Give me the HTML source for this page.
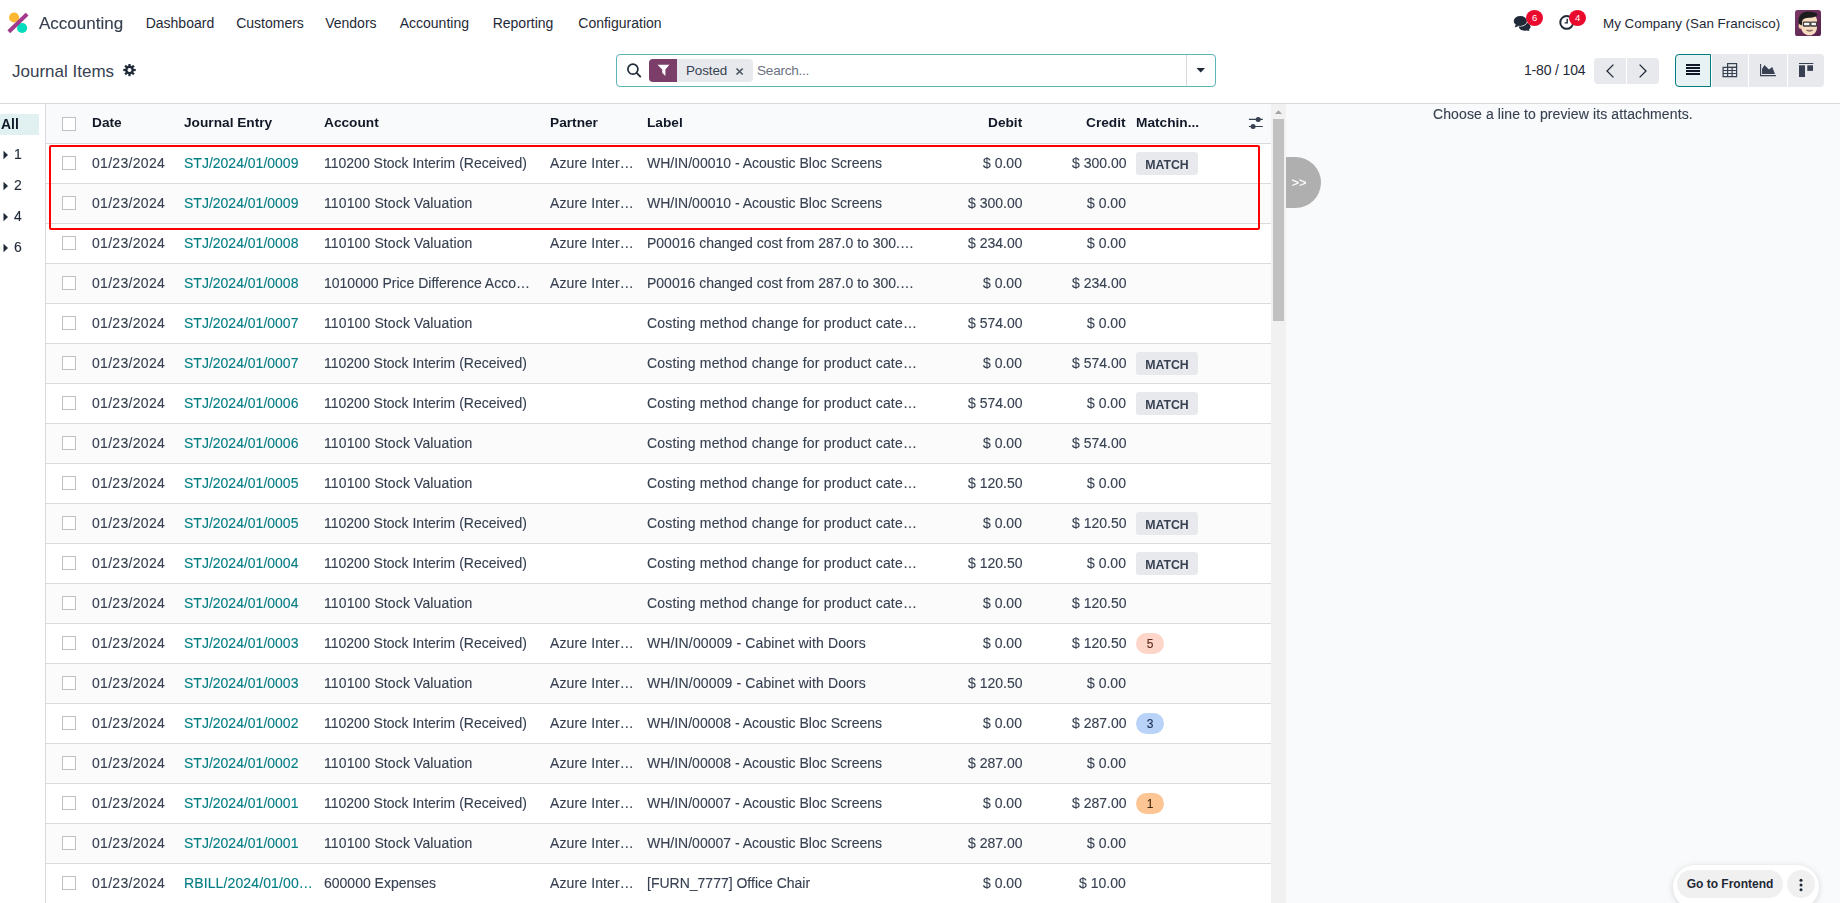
<!DOCTYPE html>
<html><head><meta charset="utf-8"><title>Journal Items</title>
<style>
html,body{margin:0;padding:0;}
body{width:1840px;height:903px;overflow:hidden;position:relative;background:#fff;font-family:"Liberation Sans", sans-serif;}
.t{position:absolute;white-space:nowrap;}
.g{will-change:transform;-webkit-text-stroke:0.12px currentColor;}
.gb{will-change:transform;}
.b{position:absolute;}
</style></head><body>
<svg class="b" style="left:0;top:0" width="40" height="46" viewBox="0 0 40 46">
<circle cx="14.1" cy="17.5" r="5.1" fill="#FDB733"/>
<circle cx="22.1" cy="28" r="5.1" fill="#00DDBE"/>
<line x1="8.8" y1="31.8" x2="27.1" y2="14.1" stroke="#A3398A" stroke-width="4" stroke-linecap="butt"/>
</svg><div class="t g" style="left:39px;top:13.71px;font-size:17px;line-height:20px;color:#374151;font-weight:400;">Accounting</div><div class="t" style="left:145.7px;top:14.95px;font-size:14px;line-height:16px;color:#1f2937;font-weight:400;">Dashboard</div><div class="t" style="left:236.2px;top:14.95px;font-size:14px;line-height:16px;color:#1f2937;font-weight:400;">Customers</div><div class="t" style="left:325.2px;top:14.95px;font-size:14px;line-height:16px;color:#1f2937;font-weight:400;">Vendors</div><div class="t" style="left:399.7px;top:14.95px;font-size:14px;line-height:16px;color:#1f2937;font-weight:400;">Accounting</div><div class="t" style="left:492.7px;top:14.95px;font-size:14px;line-height:16px;color:#1f2937;font-weight:400;">Reporting</div><div class="t" style="left:578.3px;top:14.95px;font-size:14px;line-height:16px;color:#1f2937;font-weight:400;">Configuration</div><svg class="b" style="left:1510px;top:12px" width="24" height="22" viewBox="0 0 24 22">
<path d="M14.6 10.4 C18 10.4 20.6 12.4 20.6 14.6 C20.6 15.9 19.9 17 18.8 17.7 L19.6 18.9 L16.4 18.4 C15.8 18.6 15.2 18.7 14.6 18.7 C11.4 18.7 8.8 16.8 8.8 14.6 C8.8 12.4 11.4 10.4 14.6 10.4Z" fill="#1f2937"/>
<ellipse cx="10.3" cy="9" rx="7.2" ry="5.6" fill="#fff"/>
<ellipse cx="10.3" cy="9" rx="6.6" ry="5.1" fill="#1f2937"/>
<path d="M5.8 12.6 L4.6 15.6 L9.5 13.8Z" fill="#1f2937"/>
</svg><div class="b" style="left:1526px;top:10px;width:17px;height:16px;border-radius:50%;background:#EA0A2E;"></div><div class="t" style="left:1234.6px;width:600px;text-align:center;top:12.41px;font-size:9.5px;line-height:11px;color:#fff;font-weight:400;">6</div><svg class="b" style="left:1557px;top:13px" width="20" height="20" viewBox="0 0 20 20">
<circle cx="9.7" cy="9.4" r="6.4" fill="none" stroke="#1f2937" stroke-width="2"/>
<path d="M10.2 5.8 V9.9 H7.6" fill="none" stroke="#1f2937" stroke-width="1.4"/>
</svg><div class="b" style="left:1569px;top:10px;width:17px;height:16px;border-radius:50%;background:#EA0A2E;"></div><div class="t" style="left:1277.7px;width:600px;text-align:center;top:12.41px;font-size:9.5px;line-height:11px;color:#fff;font-weight:400;">4</div><div class="t" style="left:1603px;top:15.76px;font-size:13.4px;line-height:15px;color:#1f2937;font-weight:400;">My Company (San Francisco)</div><svg class="b" style="left:1795px;top:10px" width="26" height="26" viewBox="0 0 26 26">
<defs><linearGradient id="av" x1="0" y1="0" x2="1" y2="1"><stop offset="0" stop-color="#7b3a68"/><stop offset="1" stop-color="#57204a"/></linearGradient>
<clipPath id="avc"><rect width="26" height="26" rx="2.6"/></clipPath></defs>
<rect width="26" height="26" rx="2.6" fill="url(#av)"/>
<g clip-path="url(#avc)">
<ellipse cx="5.6" cy="16" rx="2" ry="2.8" fill="#f3cfae"/>
<path d="M6 10 C6 5.5 9.5 5 14 5 C19 5 22 6 22 11 L22 17 C22 22.5 18.5 25.3 14.5 25.3 C10 25.3 6.5 22.5 6 17Z" fill="#f8dcc0"/>
<path d="M3.6 12.5 C3 5 7.5 1.6 13 1.6 C17.5 1.6 21 2.4 22.6 4.2 C21.8 6.4 18.5 7.6 14 7.8 C10.5 8 8 8.6 7.2 11 L6.8 15.5 C5.5 15 4 14 3.6 12.5Z" fill="#1c1c1c"/>
<rect x="8.4" y="12.2" width="6.6" height="3.8" rx="0.6" fill="#f4f4f4" stroke="#3a3a3a" stroke-width="1.3"/>
<rect x="15.8" y="12.2" width="5.8" height="3.8" rx="0.6" fill="#f4f4f4" stroke="#3a3a3a" stroke-width="1.3"/>
<path d="M11.6 20.3 Q14.6 22.6 17.6 20.3 Z" fill="#fff" stroke="#6b4a45" stroke-width="0.8"/>
</g>
</svg><div class="b" style="left:0px;top:103px;width:1840px;height:1px;background:#d8dadd;"></div><div class="t" style="left:12px;top:62.11px;font-size:17px;line-height:20px;color:#374151;font-weight:400;">Journal Items</div><svg class="b" style="left:123px;top:64px" width="13" height="13" viewBox="0 0 13 13">
<g transform="translate(6.5,6)" fill="#1f2937"><rect x="-1.1" y="-6.2" width="2.2" height="3" transform="rotate(0)"/><rect x="-1.1" y="-6.2" width="2.2" height="3" transform="rotate(45)"/><rect x="-1.1" y="-6.2" width="2.2" height="3" transform="rotate(90)"/><rect x="-1.1" y="-6.2" width="2.2" height="3" transform="rotate(135)"/><rect x="-1.1" y="-6.2" width="2.2" height="3" transform="rotate(180)"/><rect x="-1.1" y="-6.2" width="2.2" height="3" transform="rotate(225)"/><rect x="-1.1" y="-6.2" width="2.2" height="3" transform="rotate(270)"/><rect x="-1.1" y="-6.2" width="2.2" height="3" transform="rotate(315)"/><circle r="4.4"/><circle r="2" fill="#fff"/></g>
</svg><div class="b" style="left:616px;top:54px;width:600px;height:33px;box-sizing:border-box;border:1px solid #5db4b8;border-radius:4px;background:#fff;"></div><svg class="b" style="left:626px;top:62px" width="17" height="17" viewBox="0 0 17 17">
<circle cx="6.9" cy="7.2" r="5" fill="none" stroke="#1f2937" stroke-width="1.7"/>
<line x1="10.6" y1="10.9" x2="14.8" y2="15.2" stroke="#1f2937" stroke-width="1.8"/>
</svg><div class="b" style="left:649px;top:59px;width:104px;height:23px;border-radius:4px;background:#e7e9ed;"></div><div class="b" style="left:649px;top:59px;width:28px;height:23px;border-radius:4px 0 0 4px;background:#7a3e68;"></div><svg class="b" style="left:655px;top:63px" width="16" height="16" viewBox="0 0 16 16">
<path d="M2.5 1.8 H14.4 L10.4 6.4 V12.9 L7.2 9.8 V6.4Z" fill="#fff"/>
</svg><div class="t" style="left:686px;top:62.86px;font-size:13.4px;line-height:15px;color:#374151;font-weight:400;letter-spacing:-0.1px;">Posted</div><svg class="b" style="left:734px;top:65px" width="12" height="12" viewBox="0 0 12 12">
<path d="M2.5 3.5 L8.7 9.5 M8.7 3.5 L2.5 9.5" stroke="#4b5563" stroke-width="1.7"/>
</svg><div class="t" style="left:757px;top:63.09px;font-size:13.6px;line-height:16px;color:#6b7280;font-weight:400;letter-spacing:-0.25px;">Search...</div><div class="b" style="left:1186px;top:55px;width:1px;height:31px;background:#d8dadd;"></div><svg class="b" style="left:1195px;top:66px" width="12" height="8" viewBox="0 0 12 8">
<path d="M1.5 2 H10 L5.75 6.4Z" fill="#1f2937"/>
</svg><div class="t" style="right:254.5px;top:62.35px;font-size:14px;line-height:16px;color:#1f2937;font-weight:400;letter-spacing:-0.15px;">1-80 / 104</div><div class="b" style="left:1594px;top:58px;width:65px;height:26px;border-radius:4px;background:#e7e9ed;"></div><div class="b" style="left:1626px;top:58px;width:1px;height:26px;background:#fff;"></div><svg class="b" style="left:1594px;top:58px" width="65" height="26" viewBox="0 0 65 26">
<path d="M19.4 6.6 L13 13 L19.4 19.4" fill="none" stroke="#1f2937" stroke-width="1.3"/>
<path d="M45.6 6.6 L52 13 L45.6 19.4" fill="none" stroke="#1f2937" stroke-width="1.3"/>
</svg><div class="b" style="left:1675px;top:54px;width:149px;height:33px;border-radius:4px;background:#e7e9ed;"></div><div class="b" style="left:1711px;top:54px;width:1px;height:33px;background:#fff;"></div><div class="b" style="left:1748px;top:54px;width:1px;height:33px;background:#fff;"></div><div class="b" style="left:1787px;top:54px;width:1px;height:33px;background:#fff;"></div><div class="b" style="left:1675px;top:54px;width:36px;height:33px;box-sizing:border-box;border:1px solid #017e84;border-radius:4px 0 0 4px;background:#e6f2f3;"></div><svg class="b" style="left:1675px;top:54px" width="149" height="33" viewBox="0 0 149 33">
<g fill="#111827">
<rect x="11" y="10" width="14" height="2"/><rect x="11" y="13" width="14" height="2"/>
<rect x="11" y="16" width="14" height="2"/><rect x="11" y="19" width="14" height="2"/>
</g>
<g fill="none" stroke="#374151" stroke-width="1.2">
<rect x="52.6" y="9.6" width="9" height="3.8"/>
<path d="M48.1 13.4 H61.6 V22.6 H48.1Z M48.1 16.5 H61.6 M48.1 19.5 H61.6 M52.6 13.4 V22.6 M57.1 13.4 V22.6"/>
</g>
<path d="M85.6 10 V21.6 H100.9" fill="none" stroke="#374151" stroke-width="1.1"/>
<path d="M87 20.1 V15 L89.5 10.9 L94 15.5 L97.2 12.9 L100 20.1Z" fill="#374151"/>
<rect x="124" y="9" width="14.3" height="1" fill="#374151"/>
<rect x="124" y="11.3" width="6" height="11.7" fill="#374151"/>
<rect x="132.3" y="11.3" width="5.7" height="5.6" fill="#374151"/>
</svg><div class="b" style="left:45px;top:104px;width:1px;height:799px;background:#d8dadd;"></div><div class="b" style="left:0px;top:114px;width:39px;height:21px;background:#e1f0f1;"></div><div class="t gb" style="left:0.5px;top:115.95px;font-size:14px;line-height:16px;color:#111827;font-weight:700;">All</div><svg class="b" style="left:3px;top:149.5px" width="6" height="10" viewBox="0 0 6 10"><path d="M0.5 0.8 L5 5 L0.5 9.2Z" fill="#1f2937"/></svg><div class="t g" style="left:13.8px;top:145.65px;font-size:14px;line-height:16px;color:#1f2937;font-weight:400;">1</div><svg class="b" style="left:3px;top:180.5px" width="6" height="10" viewBox="0 0 6 10"><path d="M0.5 0.8 L5 5 L0.5 9.2Z" fill="#1f2937"/></svg><div class="t g" style="left:13.8px;top:176.65px;font-size:14px;line-height:16px;color:#1f2937;font-weight:400;">2</div><svg class="b" style="left:3px;top:211.5px" width="6" height="10" viewBox="0 0 6 10"><path d="M0.5 0.8 L5 5 L0.5 9.2Z" fill="#1f2937"/></svg><div class="t g" style="left:13.8px;top:207.65px;font-size:14px;line-height:16px;color:#1f2937;font-weight:400;">4</div><svg class="b" style="left:3px;top:242.5px" width="6" height="10" viewBox="0 0 6 10"><path d="M0.5 0.8 L5 5 L0.5 9.2Z" fill="#1f2937"/></svg><div class="t g" style="left:13.8px;top:238.65px;font-size:14px;line-height:16px;color:#1f2937;font-weight:400;">6</div><div class="b" style="left:46px;top:104px;width:1225px;height:39px;background:#f9fafb;"></div><div class="b" style="left:46px;top:143px;width:1225px;height:1px;background:#d8dadd;"></div><div class="b" style="left:62px;top:117px;width:14px;height:14px;box-sizing:border-box;border:1px solid #c0c0c0;border-radius:0;background:#fff;"></div><div class="t gb" style="left:92.2px;top:115.05px;font-size:13.7px;line-height:16px;color:#111827;font-weight:700;">Date</div><div class="t gb" style="left:184.4px;top:115.05px;font-size:13.7px;line-height:16px;color:#111827;font-weight:700;">Journal Entry</div><div class="t gb" style="left:324px;top:115.05px;font-size:13.7px;line-height:16px;color:#111827;font-weight:700;">Account</div><div class="t gb" style="left:550.4px;top:115.05px;font-size:13.7px;line-height:16px;color:#111827;font-weight:700;">Partner</div><div class="t gb" style="left:647.4px;top:115.05px;font-size:13.7px;line-height:16px;color:#111827;font-weight:700;">Label</div><div class="t gb" style="right:818px;top:115.05px;font-size:13.7px;line-height:16px;color:#111827;font-weight:700;">Debit</div><div class="t gb" style="right:714px;top:115.05px;font-size:13.7px;line-height:16px;color:#111827;font-weight:700;">Credit</div><div class="t gb" style="left:1136.3px;top:115.05px;font-size:13.7px;line-height:16px;color:#111827;font-weight:700;">Matchin...</div><svg class="b" style="left:1247px;top:115px" width="17" height="16" viewBox="0 0 17 16">
<path d="M1.9 4.4 H15.8 M1.9 11.5 H15.8" stroke="#374151" stroke-width="1.1"/>
<circle cx="11.2" cy="4.4" r="2.5" fill="#374151"/>
<circle cx="6.1" cy="11.5" r="2.5" fill="#374151"/>
</svg><div class="b" style="left:46px;top:144px;width:1225px;height:39px;background:#ffffff;"></div><div class="b" style="left:46px;top:183px;width:1225px;height:1px;background:#d9dbde;"></div><div class="b" style="left:62px;top:156px;width:14px;height:14px;box-sizing:border-box;border:1px solid #c0c0c0;border-radius:0;background:#fff;"></div><div class="t g" style="left:92px;top:155.35px;font-size:14px;line-height:16px;color:#374151;font-weight:400;letter-spacing:0.3px;">01/23/2024</div><div class="t g" style="left:184px;top:155.35px;font-size:14px;line-height:16px;color:#017e84;font-weight:400;">STJ/2024/01/0009</div><div class="t g" style="left:324px;top:155.35px;font-size:14px;line-height:16px;color:#374151;font-weight:400;">110200 Stock Interim (Received)</div><div class="t g" style="left:550px;top:155.35px;font-size:14px;line-height:16px;color:#374151;font-weight:400;letter-spacing:0.12px;">Azure Inter…</div><div class="t g" style="left:647px;top:155.35px;font-size:14px;line-height:16px;color:#374151;font-weight:400;">WH/IN/00010 - Acoustic Bloc Screens</div><div class="t g" style="right:818px;top:155.35px;font-size:14px;line-height:16px;color:#374151;font-weight:400;">$ 0.00</div><div class="t g" style="right:714px;top:155.35px;font-size:14px;line-height:16px;color:#374151;font-weight:400;">$ 300.00</div><div class="b" style="left:1136px;top:152px;width:62px;height:23px;border-radius:3px;background:#e7e9ed;"></div><div class="t gb" style="left:867px;width:600px;text-align:center;top:158.04px;font-size:12.3px;line-height:14px;color:#374151;font-weight:700;">MATCH</div><div class="b" style="left:46px;top:184px;width:1225px;height:39px;background:#fbfbfb;"></div><div class="b" style="left:46px;top:223px;width:1225px;height:1px;background:#d9dbde;"></div><div class="b" style="left:62px;top:196px;width:14px;height:14px;box-sizing:border-box;border:1px solid #c0c0c0;border-radius:0;background:#fff;"></div><div class="t g" style="left:92px;top:195.35px;font-size:14px;line-height:16px;color:#374151;font-weight:400;letter-spacing:0.3px;">01/23/2024</div><div class="t g" style="left:184px;top:195.35px;font-size:14px;line-height:16px;color:#017e84;font-weight:400;">STJ/2024/01/0009</div><div class="t g" style="left:324px;top:195.35px;font-size:14px;line-height:16px;color:#374151;font-weight:400;letter-spacing:0.12px;">110100 Stock Valuation</div><div class="t g" style="left:550px;top:195.35px;font-size:14px;line-height:16px;color:#374151;font-weight:400;letter-spacing:0.12px;">Azure Inter…</div><div class="t g" style="left:647px;top:195.35px;font-size:14px;line-height:16px;color:#374151;font-weight:400;">WH/IN/00010 - Acoustic Bloc Screens</div><div class="t g" style="right:818px;top:195.35px;font-size:14px;line-height:16px;color:#374151;font-weight:400;">$ 300.00</div><div class="t g" style="right:714px;top:195.35px;font-size:14px;line-height:16px;color:#374151;font-weight:400;">$ 0.00</div><div class="b" style="left:46px;top:224px;width:1225px;height:39px;background:#ffffff;"></div><div class="b" style="left:46px;top:263px;width:1225px;height:1px;background:#d9dbde;"></div><div class="b" style="left:62px;top:236px;width:14px;height:14px;box-sizing:border-box;border:1px solid #c0c0c0;border-radius:0;background:#fff;"></div><div class="t g" style="left:92px;top:235.35px;font-size:14px;line-height:16px;color:#374151;font-weight:400;letter-spacing:0.3px;">01/23/2024</div><div class="t g" style="left:184px;top:235.35px;font-size:14px;line-height:16px;color:#017e84;font-weight:400;">STJ/2024/01/0008</div><div class="t g" style="left:324px;top:235.35px;font-size:14px;line-height:16px;color:#374151;font-weight:400;letter-spacing:0.12px;">110100 Stock Valuation</div><div class="t g" style="left:550px;top:235.35px;font-size:14px;line-height:16px;color:#374151;font-weight:400;letter-spacing:0.12px;">Azure Inter…</div><div class="t g" style="left:647px;top:235.35px;font-size:14px;line-height:16px;color:#374151;font-weight:400;">P00016 changed cost from 287.0 to 300.…</div><div class="t g" style="right:818px;top:235.35px;font-size:14px;line-height:16px;color:#374151;font-weight:400;">$ 234.00</div><div class="t g" style="right:714px;top:235.35px;font-size:14px;line-height:16px;color:#374151;font-weight:400;">$ 0.00</div><div class="b" style="left:46px;top:264px;width:1225px;height:39px;background:#fbfbfb;"></div><div class="b" style="left:46px;top:303px;width:1225px;height:1px;background:#d9dbde;"></div><div class="b" style="left:62px;top:276px;width:14px;height:14px;box-sizing:border-box;border:1px solid #c0c0c0;border-radius:0;background:#fff;"></div><div class="t g" style="left:92px;top:275.35px;font-size:14px;line-height:16px;color:#374151;font-weight:400;letter-spacing:0.3px;">01/23/2024</div><div class="t g" style="left:184px;top:275.35px;font-size:14px;line-height:16px;color:#017e84;font-weight:400;">STJ/2024/01/0008</div><div class="t g" style="left:324px;top:275.35px;font-size:14px;line-height:16px;color:#374151;font-weight:400;">1010000 Price Difference Acco…</div><div class="t g" style="left:550px;top:275.35px;font-size:14px;line-height:16px;color:#374151;font-weight:400;letter-spacing:0.12px;">Azure Inter…</div><div class="t g" style="left:647px;top:275.35px;font-size:14px;line-height:16px;color:#374151;font-weight:400;">P00016 changed cost from 287.0 to 300.…</div><div class="t g" style="right:818px;top:275.35px;font-size:14px;line-height:16px;color:#374151;font-weight:400;">$ 0.00</div><div class="t g" style="right:714px;top:275.35px;font-size:14px;line-height:16px;color:#374151;font-weight:400;">$ 234.00</div><div class="b" style="left:46px;top:304px;width:1225px;height:39px;background:#ffffff;"></div><div class="b" style="left:46px;top:343px;width:1225px;height:1px;background:#d9dbde;"></div><div class="b" style="left:62px;top:316px;width:14px;height:14px;box-sizing:border-box;border:1px solid #c0c0c0;border-radius:0;background:#fff;"></div><div class="t g" style="left:92px;top:315.35px;font-size:14px;line-height:16px;color:#374151;font-weight:400;letter-spacing:0.3px;">01/23/2024</div><div class="t g" style="left:184px;top:315.35px;font-size:14px;line-height:16px;color:#017e84;font-weight:400;">STJ/2024/01/0007</div><div class="t g" style="left:324px;top:315.35px;font-size:14px;line-height:16px;color:#374151;font-weight:400;letter-spacing:0.12px;">110100 Stock Valuation</div><div class="t g" style="left:647px;top:315.35px;font-size:14px;line-height:16px;color:#374151;font-weight:400;letter-spacing:0.18px;">Costing method change for product cate…</div><div class="t g" style="right:818px;top:315.35px;font-size:14px;line-height:16px;color:#374151;font-weight:400;">$ 574.00</div><div class="t g" style="right:714px;top:315.35px;font-size:14px;line-height:16px;color:#374151;font-weight:400;">$ 0.00</div><div class="b" style="left:46px;top:344px;width:1225px;height:39px;background:#fbfbfb;"></div><div class="b" style="left:46px;top:383px;width:1225px;height:1px;background:#d9dbde;"></div><div class="b" style="left:62px;top:356px;width:14px;height:14px;box-sizing:border-box;border:1px solid #c0c0c0;border-radius:0;background:#fff;"></div><div class="t g" style="left:92px;top:355.35px;font-size:14px;line-height:16px;color:#374151;font-weight:400;letter-spacing:0.3px;">01/23/2024</div><div class="t g" style="left:184px;top:355.35px;font-size:14px;line-height:16px;color:#017e84;font-weight:400;">STJ/2024/01/0007</div><div class="t g" style="left:324px;top:355.35px;font-size:14px;line-height:16px;color:#374151;font-weight:400;">110200 Stock Interim (Received)</div><div class="t g" style="left:647px;top:355.35px;font-size:14px;line-height:16px;color:#374151;font-weight:400;letter-spacing:0.18px;">Costing method change for product cate…</div><div class="t g" style="right:818px;top:355.35px;font-size:14px;line-height:16px;color:#374151;font-weight:400;">$ 0.00</div><div class="t g" style="right:714px;top:355.35px;font-size:14px;line-height:16px;color:#374151;font-weight:400;">$ 574.00</div><div class="b" style="left:1136px;top:352px;width:62px;height:23px;border-radius:3px;background:#e7e9ed;"></div><div class="t gb" style="left:867px;width:600px;text-align:center;top:358.04px;font-size:12.3px;line-height:14px;color:#374151;font-weight:700;">MATCH</div><div class="b" style="left:46px;top:384px;width:1225px;height:39px;background:#ffffff;"></div><div class="b" style="left:46px;top:423px;width:1225px;height:1px;background:#d9dbde;"></div><div class="b" style="left:62px;top:396px;width:14px;height:14px;box-sizing:border-box;border:1px solid #c0c0c0;border-radius:0;background:#fff;"></div><div class="t g" style="left:92px;top:395.35px;font-size:14px;line-height:16px;color:#374151;font-weight:400;letter-spacing:0.3px;">01/23/2024</div><div class="t g" style="left:184px;top:395.35px;font-size:14px;line-height:16px;color:#017e84;font-weight:400;">STJ/2024/01/0006</div><div class="t g" style="left:324px;top:395.35px;font-size:14px;line-height:16px;color:#374151;font-weight:400;">110200 Stock Interim (Received)</div><div class="t g" style="left:647px;top:395.35px;font-size:14px;line-height:16px;color:#374151;font-weight:400;letter-spacing:0.18px;">Costing method change for product cate…</div><div class="t g" style="right:818px;top:395.35px;font-size:14px;line-height:16px;color:#374151;font-weight:400;">$ 574.00</div><div class="t g" style="right:714px;top:395.35px;font-size:14px;line-height:16px;color:#374151;font-weight:400;">$ 0.00</div><div class="b" style="left:1136px;top:392px;width:62px;height:23px;border-radius:3px;background:#e7e9ed;"></div><div class="t gb" style="left:867px;width:600px;text-align:center;top:398.04px;font-size:12.3px;line-height:14px;color:#374151;font-weight:700;">MATCH</div><div class="b" style="left:46px;top:424px;width:1225px;height:39px;background:#fbfbfb;"></div><div class="b" style="left:46px;top:463px;width:1225px;height:1px;background:#d9dbde;"></div><div class="b" style="left:62px;top:436px;width:14px;height:14px;box-sizing:border-box;border:1px solid #c0c0c0;border-radius:0;background:#fff;"></div><div class="t g" style="left:92px;top:435.35px;font-size:14px;line-height:16px;color:#374151;font-weight:400;letter-spacing:0.3px;">01/23/2024</div><div class="t g" style="left:184px;top:435.35px;font-size:14px;line-height:16px;color:#017e84;font-weight:400;">STJ/2024/01/0006</div><div class="t g" style="left:324px;top:435.35px;font-size:14px;line-height:16px;color:#374151;font-weight:400;letter-spacing:0.12px;">110100 Stock Valuation</div><div class="t g" style="left:647px;top:435.35px;font-size:14px;line-height:16px;color:#374151;font-weight:400;letter-spacing:0.18px;">Costing method change for product cate…</div><div class="t g" style="right:818px;top:435.35px;font-size:14px;line-height:16px;color:#374151;font-weight:400;">$ 0.00</div><div class="t g" style="right:714px;top:435.35px;font-size:14px;line-height:16px;color:#374151;font-weight:400;">$ 574.00</div><div class="b" style="left:46px;top:464px;width:1225px;height:39px;background:#ffffff;"></div><div class="b" style="left:46px;top:503px;width:1225px;height:1px;background:#d9dbde;"></div><div class="b" style="left:62px;top:476px;width:14px;height:14px;box-sizing:border-box;border:1px solid #c0c0c0;border-radius:0;background:#fff;"></div><div class="t g" style="left:92px;top:475.35px;font-size:14px;line-height:16px;color:#374151;font-weight:400;letter-spacing:0.3px;">01/23/2024</div><div class="t g" style="left:184px;top:475.35px;font-size:14px;line-height:16px;color:#017e84;font-weight:400;">STJ/2024/01/0005</div><div class="t g" style="left:324px;top:475.35px;font-size:14px;line-height:16px;color:#374151;font-weight:400;letter-spacing:0.12px;">110100 Stock Valuation</div><div class="t g" style="left:647px;top:475.35px;font-size:14px;line-height:16px;color:#374151;font-weight:400;letter-spacing:0.18px;">Costing method change for product cate…</div><div class="t g" style="right:818px;top:475.35px;font-size:14px;line-height:16px;color:#374151;font-weight:400;">$ 120.50</div><div class="t g" style="right:714px;top:475.35px;font-size:14px;line-height:16px;color:#374151;font-weight:400;">$ 0.00</div><div class="b" style="left:46px;top:504px;width:1225px;height:39px;background:#fbfbfb;"></div><div class="b" style="left:46px;top:543px;width:1225px;height:1px;background:#d9dbde;"></div><div class="b" style="left:62px;top:516px;width:14px;height:14px;box-sizing:border-box;border:1px solid #c0c0c0;border-radius:0;background:#fff;"></div><div class="t g" style="left:92px;top:515.35px;font-size:14px;line-height:16px;color:#374151;font-weight:400;letter-spacing:0.3px;">01/23/2024</div><div class="t g" style="left:184px;top:515.35px;font-size:14px;line-height:16px;color:#017e84;font-weight:400;">STJ/2024/01/0005</div><div class="t g" style="left:324px;top:515.35px;font-size:14px;line-height:16px;color:#374151;font-weight:400;">110200 Stock Interim (Received)</div><div class="t g" style="left:647px;top:515.35px;font-size:14px;line-height:16px;color:#374151;font-weight:400;letter-spacing:0.18px;">Costing method change for product cate…</div><div class="t g" style="right:818px;top:515.35px;font-size:14px;line-height:16px;color:#374151;font-weight:400;">$ 0.00</div><div class="t g" style="right:714px;top:515.35px;font-size:14px;line-height:16px;color:#374151;font-weight:400;">$ 120.50</div><div class="b" style="left:1136px;top:512px;width:62px;height:23px;border-radius:3px;background:#e7e9ed;"></div><div class="t gb" style="left:867px;width:600px;text-align:center;top:518.04px;font-size:12.3px;line-height:14px;color:#374151;font-weight:700;">MATCH</div><div class="b" style="left:46px;top:544px;width:1225px;height:39px;background:#ffffff;"></div><div class="b" style="left:46px;top:583px;width:1225px;height:1px;background:#d9dbde;"></div><div class="b" style="left:62px;top:556px;width:14px;height:14px;box-sizing:border-box;border:1px solid #c0c0c0;border-radius:0;background:#fff;"></div><div class="t g" style="left:92px;top:555.35px;font-size:14px;line-height:16px;color:#374151;font-weight:400;letter-spacing:0.3px;">01/23/2024</div><div class="t g" style="left:184px;top:555.35px;font-size:14px;line-height:16px;color:#017e84;font-weight:400;">STJ/2024/01/0004</div><div class="t g" style="left:324px;top:555.35px;font-size:14px;line-height:16px;color:#374151;font-weight:400;">110200 Stock Interim (Received)</div><div class="t g" style="left:647px;top:555.35px;font-size:14px;line-height:16px;color:#374151;font-weight:400;letter-spacing:0.18px;">Costing method change for product cate…</div><div class="t g" style="right:818px;top:555.35px;font-size:14px;line-height:16px;color:#374151;font-weight:400;">$ 120.50</div><div class="t g" style="right:714px;top:555.35px;font-size:14px;line-height:16px;color:#374151;font-weight:400;">$ 0.00</div><div class="b" style="left:1136px;top:552px;width:62px;height:23px;border-radius:3px;background:#e7e9ed;"></div><div class="t gb" style="left:867px;width:600px;text-align:center;top:558.04px;font-size:12.3px;line-height:14px;color:#374151;font-weight:700;">MATCH</div><div class="b" style="left:46px;top:584px;width:1225px;height:39px;background:#fbfbfb;"></div><div class="b" style="left:46px;top:623px;width:1225px;height:1px;background:#d9dbde;"></div><div class="b" style="left:62px;top:596px;width:14px;height:14px;box-sizing:border-box;border:1px solid #c0c0c0;border-radius:0;background:#fff;"></div><div class="t g" style="left:92px;top:595.35px;font-size:14px;line-height:16px;color:#374151;font-weight:400;letter-spacing:0.3px;">01/23/2024</div><div class="t g" style="left:184px;top:595.35px;font-size:14px;line-height:16px;color:#017e84;font-weight:400;">STJ/2024/01/0004</div><div class="t g" style="left:324px;top:595.35px;font-size:14px;line-height:16px;color:#374151;font-weight:400;letter-spacing:0.12px;">110100 Stock Valuation</div><div class="t g" style="left:647px;top:595.35px;font-size:14px;line-height:16px;color:#374151;font-weight:400;letter-spacing:0.18px;">Costing method change for product cate…</div><div class="t g" style="right:818px;top:595.35px;font-size:14px;line-height:16px;color:#374151;font-weight:400;">$ 0.00</div><div class="t g" style="right:714px;top:595.35px;font-size:14px;line-height:16px;color:#374151;font-weight:400;">$ 120.50</div><div class="b" style="left:46px;top:624px;width:1225px;height:39px;background:#ffffff;"></div><div class="b" style="left:46px;top:663px;width:1225px;height:1px;background:#d9dbde;"></div><div class="b" style="left:62px;top:636px;width:14px;height:14px;box-sizing:border-box;border:1px solid #c0c0c0;border-radius:0;background:#fff;"></div><div class="t g" style="left:92px;top:635.35px;font-size:14px;line-height:16px;color:#374151;font-weight:400;letter-spacing:0.3px;">01/23/2024</div><div class="t g" style="left:184px;top:635.35px;font-size:14px;line-height:16px;color:#017e84;font-weight:400;">STJ/2024/01/0003</div><div class="t g" style="left:324px;top:635.35px;font-size:14px;line-height:16px;color:#374151;font-weight:400;">110200 Stock Interim (Received)</div><div class="t g" style="left:550px;top:635.35px;font-size:14px;line-height:16px;color:#374151;font-weight:400;letter-spacing:0.12px;">Azure Inter…</div><div class="t g" style="left:647px;top:635.35px;font-size:14px;line-height:16px;color:#374151;font-weight:400;letter-spacing:0.13px;">WH/IN/00009 - Cabinet with Doors</div><div class="t g" style="right:818px;top:635.35px;font-size:14px;line-height:16px;color:#374151;font-weight:400;">$ 0.00</div><div class="t g" style="right:714px;top:635.35px;font-size:14px;line-height:16px;color:#374151;font-weight:400;">$ 120.50</div><div class="b" style="left:1136px;top:633px;width:28px;height:21px;border-radius:10.5px;background:#fdd5c9;"></div><div class="t g" style="left:850px;width:600px;text-align:center;top:636.64px;font-size:12px;line-height:14px;color:#5a2a1c;font-weight:400;">5</div><div class="b" style="left:46px;top:664px;width:1225px;height:39px;background:#fbfbfb;"></div><div class="b" style="left:46px;top:703px;width:1225px;height:1px;background:#d9dbde;"></div><div class="b" style="left:62px;top:676px;width:14px;height:14px;box-sizing:border-box;border:1px solid #c0c0c0;border-radius:0;background:#fff;"></div><div class="t g" style="left:92px;top:675.35px;font-size:14px;line-height:16px;color:#374151;font-weight:400;letter-spacing:0.3px;">01/23/2024</div><div class="t g" style="left:184px;top:675.35px;font-size:14px;line-height:16px;color:#017e84;font-weight:400;">STJ/2024/01/0003</div><div class="t g" style="left:324px;top:675.35px;font-size:14px;line-height:16px;color:#374151;font-weight:400;letter-spacing:0.12px;">110100 Stock Valuation</div><div class="t g" style="left:550px;top:675.35px;font-size:14px;line-height:16px;color:#374151;font-weight:400;letter-spacing:0.12px;">Azure Inter…</div><div class="t g" style="left:647px;top:675.35px;font-size:14px;line-height:16px;color:#374151;font-weight:400;letter-spacing:0.13px;">WH/IN/00009 - Cabinet with Doors</div><div class="t g" style="right:818px;top:675.35px;font-size:14px;line-height:16px;color:#374151;font-weight:400;">$ 120.50</div><div class="t g" style="right:714px;top:675.35px;font-size:14px;line-height:16px;color:#374151;font-weight:400;">$ 0.00</div><div class="b" style="left:46px;top:704px;width:1225px;height:39px;background:#ffffff;"></div><div class="b" style="left:46px;top:743px;width:1225px;height:1px;background:#d9dbde;"></div><div class="b" style="left:62px;top:716px;width:14px;height:14px;box-sizing:border-box;border:1px solid #c0c0c0;border-radius:0;background:#fff;"></div><div class="t g" style="left:92px;top:715.35px;font-size:14px;line-height:16px;color:#374151;font-weight:400;letter-spacing:0.3px;">01/23/2024</div><div class="t g" style="left:184px;top:715.35px;font-size:14px;line-height:16px;color:#017e84;font-weight:400;">STJ/2024/01/0002</div><div class="t g" style="left:324px;top:715.35px;font-size:14px;line-height:16px;color:#374151;font-weight:400;">110200 Stock Interim (Received)</div><div class="t g" style="left:550px;top:715.35px;font-size:14px;line-height:16px;color:#374151;font-weight:400;letter-spacing:0.12px;">Azure Inter…</div><div class="t g" style="left:647px;top:715.35px;font-size:14px;line-height:16px;color:#374151;font-weight:400;">WH/IN/00008 - Acoustic Bloc Screens</div><div class="t g" style="right:818px;top:715.35px;font-size:14px;line-height:16px;color:#374151;font-weight:400;">$ 0.00</div><div class="t g" style="right:714px;top:715.35px;font-size:14px;line-height:16px;color:#374151;font-weight:400;">$ 287.00</div><div class="b" style="left:1136px;top:713px;width:28px;height:21px;border-radius:10.5px;background:#b9d3f8;"></div><div class="t g" style="left:850px;width:600px;text-align:center;top:716.64px;font-size:12px;line-height:14px;color:#1c2d50;font-weight:400;">3</div><div class="b" style="left:46px;top:744px;width:1225px;height:39px;background:#fbfbfb;"></div><div class="b" style="left:46px;top:783px;width:1225px;height:1px;background:#d9dbde;"></div><div class="b" style="left:62px;top:756px;width:14px;height:14px;box-sizing:border-box;border:1px solid #c0c0c0;border-radius:0;background:#fff;"></div><div class="t g" style="left:92px;top:755.35px;font-size:14px;line-height:16px;color:#374151;font-weight:400;letter-spacing:0.3px;">01/23/2024</div><div class="t g" style="left:184px;top:755.35px;font-size:14px;line-height:16px;color:#017e84;font-weight:400;">STJ/2024/01/0002</div><div class="t g" style="left:324px;top:755.35px;font-size:14px;line-height:16px;color:#374151;font-weight:400;letter-spacing:0.12px;">110100 Stock Valuation</div><div class="t g" style="left:550px;top:755.35px;font-size:14px;line-height:16px;color:#374151;font-weight:400;letter-spacing:0.12px;">Azure Inter…</div><div class="t g" style="left:647px;top:755.35px;font-size:14px;line-height:16px;color:#374151;font-weight:400;">WH/IN/00008 - Acoustic Bloc Screens</div><div class="t g" style="right:818px;top:755.35px;font-size:14px;line-height:16px;color:#374151;font-weight:400;">$ 287.00</div><div class="t g" style="right:714px;top:755.35px;font-size:14px;line-height:16px;color:#374151;font-weight:400;">$ 0.00</div><div class="b" style="left:46px;top:784px;width:1225px;height:39px;background:#ffffff;"></div><div class="b" style="left:46px;top:823px;width:1225px;height:1px;background:#d9dbde;"></div><div class="b" style="left:62px;top:796px;width:14px;height:14px;box-sizing:border-box;border:1px solid #c0c0c0;border-radius:0;background:#fff;"></div><div class="t g" style="left:92px;top:795.35px;font-size:14px;line-height:16px;color:#374151;font-weight:400;letter-spacing:0.3px;">01/23/2024</div><div class="t g" style="left:184px;top:795.35px;font-size:14px;line-height:16px;color:#017e84;font-weight:400;">STJ/2024/01/0001</div><div class="t g" style="left:324px;top:795.35px;font-size:14px;line-height:16px;color:#374151;font-weight:400;">110200 Stock Interim (Received)</div><div class="t g" style="left:550px;top:795.35px;font-size:14px;line-height:16px;color:#374151;font-weight:400;letter-spacing:0.12px;">Azure Inter…</div><div class="t g" style="left:647px;top:795.35px;font-size:14px;line-height:16px;color:#374151;font-weight:400;">WH/IN/00007 - Acoustic Bloc Screens</div><div class="t g" style="right:818px;top:795.35px;font-size:14px;line-height:16px;color:#374151;font-weight:400;">$ 0.00</div><div class="t g" style="right:714px;top:795.35px;font-size:14px;line-height:16px;color:#374151;font-weight:400;">$ 287.00</div><div class="b" style="left:1136px;top:793px;width:28px;height:21px;border-radius:10.5px;background:#fdc594;"></div><div class="t g" style="left:850px;width:600px;text-align:center;top:796.64px;font-size:12px;line-height:14px;color:#3e2510;font-weight:400;">1</div><div class="b" style="left:46px;top:824px;width:1225px;height:39px;background:#fbfbfb;"></div><div class="b" style="left:46px;top:863px;width:1225px;height:1px;background:#d9dbde;"></div><div class="b" style="left:62px;top:836px;width:14px;height:14px;box-sizing:border-box;border:1px solid #c0c0c0;border-radius:0;background:#fff;"></div><div class="t g" style="left:92px;top:835.35px;font-size:14px;line-height:16px;color:#374151;font-weight:400;letter-spacing:0.3px;">01/23/2024</div><div class="t g" style="left:184px;top:835.35px;font-size:14px;line-height:16px;color:#017e84;font-weight:400;">STJ/2024/01/0001</div><div class="t g" style="left:324px;top:835.35px;font-size:14px;line-height:16px;color:#374151;font-weight:400;letter-spacing:0.12px;">110100 Stock Valuation</div><div class="t g" style="left:550px;top:835.35px;font-size:14px;line-height:16px;color:#374151;font-weight:400;letter-spacing:0.12px;">Azure Inter…</div><div class="t g" style="left:647px;top:835.35px;font-size:14px;line-height:16px;color:#374151;font-weight:400;">WH/IN/00007 - Acoustic Bloc Screens</div><div class="t g" style="right:818px;top:835.35px;font-size:14px;line-height:16px;color:#374151;font-weight:400;">$ 287.00</div><div class="t g" style="right:714px;top:835.35px;font-size:14px;line-height:16px;color:#374151;font-weight:400;">$ 0.00</div><div class="b" style="left:46px;top:864px;width:1225px;height:39px;background:#ffffff;"></div><div class="b" style="left:46px;top:903px;width:1225px;height:1px;background:#d9dbde;"></div><div class="b" style="left:62px;top:876px;width:14px;height:14px;box-sizing:border-box;border:1px solid #c0c0c0;border-radius:0;background:#fff;"></div><div class="t g" style="left:92px;top:875.35px;font-size:14px;line-height:16px;color:#374151;font-weight:400;letter-spacing:0.3px;">01/23/2024</div><div class="t g" style="left:184px;top:875.35px;font-size:14px;line-height:16px;color:#017e84;font-weight:400;letter-spacing:0.12px;">RBILL/2024/01/00…</div><div class="t g" style="left:324px;top:875.35px;font-size:14px;line-height:16px;color:#374151;font-weight:400;">600000 Expenses</div><div class="t g" style="left:550px;top:875.35px;font-size:14px;line-height:16px;color:#374151;font-weight:400;letter-spacing:0.12px;">Azure Inter…</div><div class="t g" style="left:647px;top:875.35px;font-size:14px;line-height:16px;color:#374151;font-weight:400;">[FURN_7777] Office Chair</div><div class="t g" style="right:818px;top:875.35px;font-size:14px;line-height:16px;color:#374151;font-weight:400;">$ 0.00</div><div class="t g" style="right:714px;top:875.35px;font-size:14px;line-height:16px;color:#374151;font-weight:400;">$ 10.00</div><div class="b" style="left:49px;top:145px;width:1211px;height:85px;box-sizing:border-box;border:2px solid #ff0000;border-radius:2px;"></div><div class="b" style="left:1271px;top:104px;width:15px;height:799px;background:#f1f1f1;"></div><svg class="b" style="left:1271px;top:104px" width="15" height="15" viewBox="0 0 15 15"><path d="M4 10 H11 L7.5 6.3Z" fill="#a3a3a3"/></svg><div class="b" style="left:1273px;top:119px;width:11px;height:202px;background:#c1c1c1;"></div><div class="b" style="left:1286px;top:104px;width:554px;height:799px;background:#f9fafb;"></div><div class="t g" style="left:1433px;top:106.15px;font-size:14px;line-height:16px;color:#374151;font-weight:400;letter-spacing:0.11px;">Choose a line to preview its attachments.</div><div class="b" style="left:1286px;top:157px;width:35px;height:51px;border-radius:0 25.5px 25.5px 0;background:#aeafae;"></div><div class="t g" style="left:998.8px;width:600px;text-align:center;top:175.20px;font-size:13px;line-height:15px;color:#fff;font-weight:400;">&gt;&gt;</div><div class="b" style="left:1673px;top:865px;width:146px;height:44px;border-radius:22px;background:#fff;box-shadow:0 1px 6px rgba(0,0,0,0.15);"></div><div class="b" style="left:1677px;top:870px;width:106px;height:28px;border-radius:14px;background:#f0f0f0;"></div><div class="t" style="left:1430px;width:600px;text-align:center;top:876.84px;font-size:12px;line-height:14px;color:#1f2937;font-weight:700;">Go to Frontend</div><div class="b" style="left:1787px;top:870px;width:28px;height:28px;border-radius:50%;background:#f0f0f0;"></div><svg class="b" style="left:1787px;top:870px" width="28" height="28" viewBox="0 0 28 28"><g fill="#1f2937"><circle cx="14" cy="10.3" r="1.5"/><circle cx="14" cy="15" r="1.5"/><circle cx="14" cy="19.7" r="1.5"/></g></svg>
</body></html>
